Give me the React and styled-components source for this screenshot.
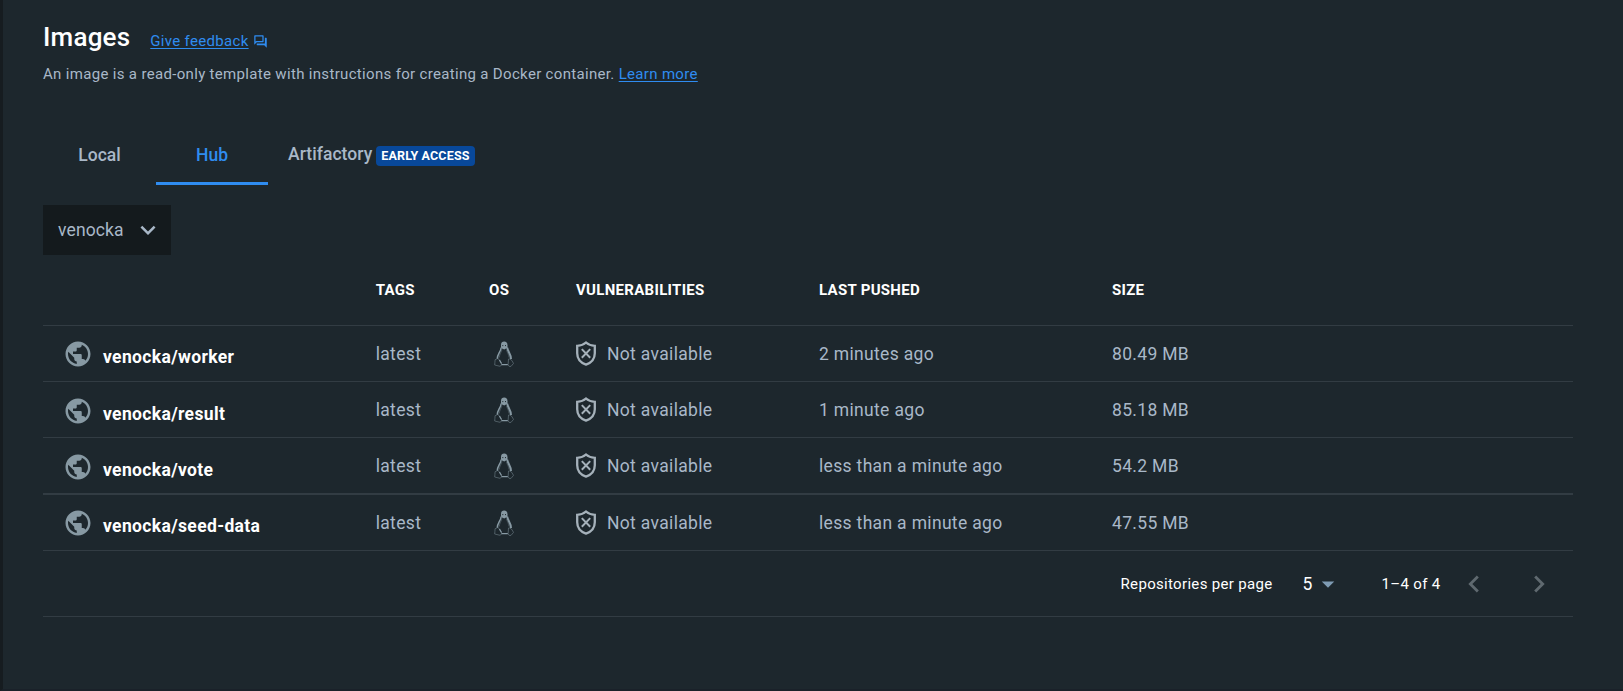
import React from "react";
import styled, { createGlobalStyle } from "styled-components";
import {
  MdPublic,
  MdOutlineForum,
  MdExpandMore,
  MdArrowDropDown,
  MdChevronLeft,
  MdChevronRight,
} from "react-icons/md";

const GlobalStyle = createGlobalStyle`
  *, *::before, *::after { box-sizing: border-box; }
  body {
    margin: 0;
    background: #1d272d;
    color: #a9b8c8;
    font-family: Roboto, "Liberation Sans", sans-serif;
    font-size: 17.5px;
  }
  svg { display: block; flex: none; }
`;

const Page = styled.main`
  height: 691px;
  padding: 20px 50px 0 40px;
  border-left: 3px solid #161c20;
  border-bottom: 2px solid #1a2129;
  overflow: hidden;
`;

const TitleBar = styled.header`
  display: flex;
  align-items: baseline;
  height: 40px;
`;

const Title = styled.h1`
  margin: 0 20px 0 0;
  color: #fff;
  font-size: 26px;
  font-weight: 500;
  line-height: 34px;
  letter-spacing: 0.2px;
`;

const Link = styled.a`
  color: #2f8cf0;
  font-size: 15px;
  letter-spacing: 0.32px;
  text-decoration: underline;
  text-underline-offset: 2px;
`;

const FeedbackIcon = styled(MdOutlineForum)`
  align-self: flex-start;
  margin: 14px 0 0 4px;
  color: #2f8cf0;
`;

const Intro = styled.p`
  margin: 0;
  height: 28px;
  font-size: 15px;
  line-height: 28px;
  letter-spacing: 0.325px;
`;

const Tabs = styled.nav`
  display: flex;
  height: 57px;
  margin-top: 40px;
`;

const Tab = styled.div`
  display: flex;
  align-items: center;
  justify-content: center;
  width: ${(p) => p.$width}px;
  height: 57px;
  font-weight: 500;
  font-size: 17.5px;
  white-space: nowrap;
  color: ${(p) => (p.$active ? "#2f8cf0" : "#a9b8c8")};
  border-bottom: 3px solid ${(p) => (p.$active ? "#2f8cf0" : "transparent")};
`;

const BadgedTab = styled(Tab)`
  justify-content: flex-start;
  padding: 0 20px 3px;
  letter-spacing: 0.05px;
`;

const Badge = styled.span`
  margin: 4px 0 0 4px;
  height: 20px;
  padding: 0 5px;
  border-radius: 4px;
  background: #08489a;
  color: #fff;
  font-size: 12.5px;
  font-weight: 700;
  line-height: 20px;
  letter-spacing: 0.15px;
`;

const AccountSelect = styled.div`
  display: flex;
  align-items: center;
  justify-content: space-between;
  width: 128px;
  height: 50px;
  margin-top: 20px;
  padding: 0 8px 0 15px;
  background: #141a1d;
  letter-spacing: 0.12px;
`;

const Row = styled.div`
  display: grid;
  grid-template-columns: 332.7px 113.3px 87px 243px 293px 1fr;
  align-items: center;
  height: ${(p) => p.$height}px;
  border-bottom: ${(p) => p.$line || 1}px solid #323c43;
`;

const HeadRow = styled(Row)`
  color: #fff;
  font-size: 15px;
  font-weight: 700;
  letter-spacing: 0.3px;
`;

const NameCell = styled.div`
  display: flex;
  align-items: center;
  gap: 10px;
  padding: ${(p) => (p.$lowered ? 2 : 0)}px 0 0 20px;
  color: #fff;
  font-weight: 700;
  letter-spacing: 0.35px;

  svg { color: #8799a3; }
  span { padding-top: 6px; }
`;

const OsCell = styled.div`
  padding-left: 5px;
  color: #8799a3;
`;

const StatusCell = styled.div`
  display: flex;
  align-items: center;
  gap: 11px;

  svg { color: #a5b1ba; }
`;

const TextCell = styled.div`
  letter-spacing: 0.33px;
`;

const Footer = styled.footer`
  display: flex;
  align-items: center;
  justify-content: flex-end;
  height: 66px;
  padding-right: 17px;
  border-bottom: 1px solid #323c43;
  color: #fff;
  font-size: 15px;
  letter-spacing: 0.32px;
`;

const PerPage = styled.div`
  display: flex;
  align-items: center;
  margin: 0 39px 0 30px;
  font-size: 17.5px;

  svg { color: #7f9bb3; }
`;

const Pager = styled.div`
  display: flex;
  gap: 31.5px;
  margin-left: 16px;
  color: #5f696f;
`;

const Tux = () => (
  <svg width="20" height="26" viewBox="0 0 20 26" fill="none" stroke="currentColor">
    <path d="M7 6.5V4C7 1.7 8.2.6 10.2.6s3.3 1.2 3.3 3.6v2.6L12 7.6l-1.8.8L8 7.4z" fill="currentColor" stroke="none" />
    <path d="M8.3 4.6h1M11 4.6h1" stroke="#1d272d" strokeWidth="1" />
    <path d="M7.2 6.5C6.9 10.5 3.5 12.8 3.3 17.6" strokeWidth="1.5" />
    <path d="M13.2 6.5C13.6 10.5 17 12.8 17 18" strokeWidth="2" />
    <path d="M8 8.5c-.5 2.5-2.5 4.5-2.7 8M12.5 9c.5 2.5 2.2 4 2.5 7.5" strokeWidth=".6" opacity=".6" />
    <path d="M3.6 17.5 1.1 18.7.9 21.5.7 24l5.3 1.3 2-1.8-3.6-5.8z" strokeWidth=".8" opacity=".6" />
    <path d="m14.5 18-.4 5.8.9 1.5 2 .1 2.5-3-1.7-3-2-1.4z" strokeWidth=".8" opacity=".6" />
    <path d="m5.500 19 2 3.500M7.500 23.600h6.300" strokeWidth="1.2" />
  </svg>
);

const Shield = () => (
  <svg width="20" height="25" viewBox="0 0 20 25" fill="none" stroke="currentColor">
    <path d="M10 1.500C7.600 3.700 5 4.600 1.200 4.900v7.300c0 5.500 3.500 9.500 8.800 11.400 5.300-1.900 8.800-5.900 8.800-11.400V4.900C15 4.600 12.400 3.700 10 1.500z" strokeWidth="2.3" />
    <path d="m5.800 8.100 8.400 8.600m0-8.600-8.400 8.600" strokeWidth="2" />
  </svg>
);

const images = [
  { name: "worker", pushed: "2 minutes ago", size: "80.49 MB", height: 56 },
  { name: "result", pushed: "1 minute ago", size: "85.18 MB", height: 56, lowered: true },
  { name: "vote", pushed: "less than a minute ago", size: "54.2 MB", height: 57, line: 2, lowered: true },
  { name: "seed-data", pushed: "less than a minute ago", size: "47.55 MB", height: 56 },
];

export default function App() {
  return (
    <Page>
      <GlobalStyle />
      <TitleBar>
        <Title>Images</Title>
        <Link>Give feedback</Link>
        <FeedbackIcon size={15} />
      </TitleBar>
      <Intro>
        An image is a read-only template with instructions for creating a Docker container.{" "}
        <Link>Learn more</Link>
      </Intro>

      <Tabs>
        <Tab $width={113}>Local</Tab>
        <Tab $width={112} $active>Hub</Tab>
        <BadgedTab $width={227}>
          Artifactory <Badge>EARLY ACCESS</Badge>
        </BadgedTab>
      </Tabs>

      <AccountSelect>
        venocka
        <MdExpandMore size={30} />
      </AccountSelect>

      <HeadRow $height={71}>
        <span />
        <span>TAGS</span>
        <span>OS</span>
        <span>VULNERABILITIES</span>
        <span>LAST PUSHED</span>
        <span>SIZE</span>
      </HeadRow>
      {images.map((image) => (
        <Row key={image.name} $height={image.height} $line={image.line}>
          <NameCell $lowered={image.lowered}>
            <MdPublic size={30} />
            <span>venocka/{image.name}</span>
          </NameCell>
          <TextCell>latest</TextCell>
          <OsCell><Tux /></OsCell>
          <StatusCell>
            <Shield />
            <TextCell>Not available</TextCell>
          </StatusCell>
          <TextCell>{image.pushed}</TextCell>
          <TextCell>{image.size}</TextCell>
        </Row>
      ))}

      <Footer>
        Repositories per page
        <PerPage>
          5
          <MdArrowDropDown size={30} />
        </PerPage>
        1–4 of 4
        <Pager>
          <MdChevronLeft size={34} />
          <MdChevronRight size={34} />
        </Pager>
      </Footer>
    </Page>
  );
}
